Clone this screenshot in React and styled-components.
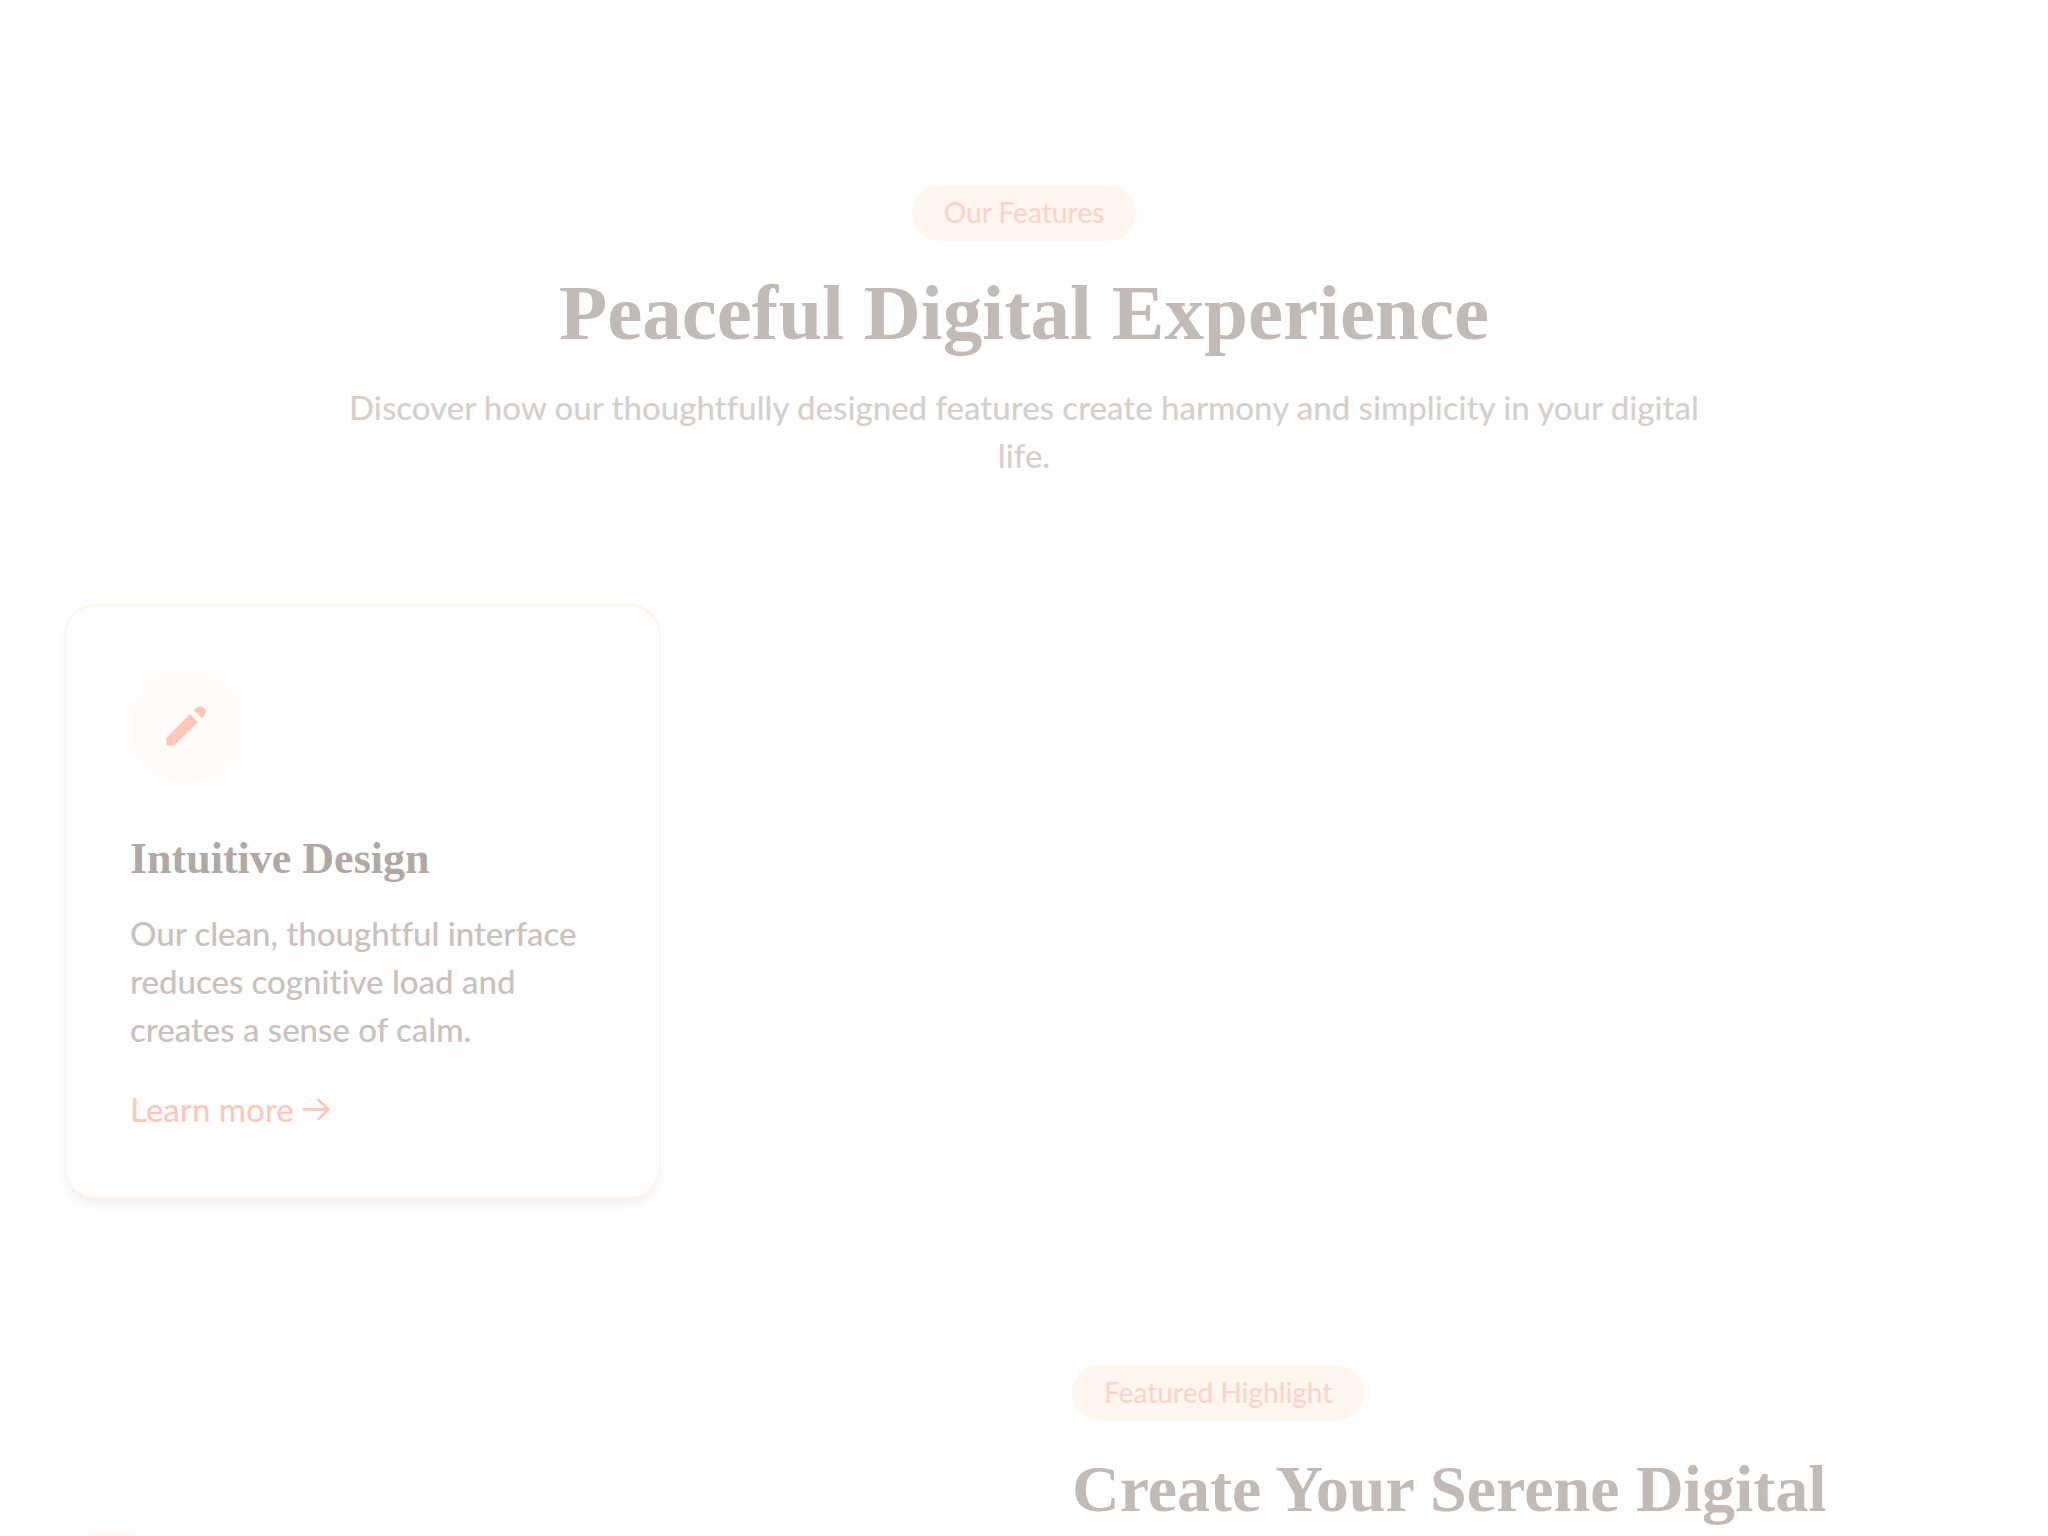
import styled, { createGlobalStyle } from 'styled-components';

const GlobalStyle = createGlobalStyle`
    * {
        box-sizing: border-box;
        margin: 0;
        padding: 0;
    }

    body {
        background: #fefefe;
        font-family: 'Lato', sans-serif;
        font-weight: 500;
        font-size: 33px;
        line-height: 48px;
        font-variant-ligatures: none;
    }
`

const Page = styled.main`
    height: 100vh;
    padding: 185px 64px 0;
    overflow: hidden;
`

const SectionHeader = styled.header`
    display: flex;
    flex-direction: column;
    align-items: center;
    max-width: 1360px;
    margin: 0 auto 125px;
    text-align: center;
`

const Badge = styled.span`
    display: inline-block;
    padding: 7px 32px 9px;
    border-radius: 28px;
    background: #fff6ef;
    font-size: 28px;
    line-height: 40px;
    color: #fcd3ca;
`

const Title = styled.h2`
    margin: 32px 0 30px;
    font-family: 'Liberation Serif', serif;
    font-weight: bold;
    font-size: 79px;
    line-height: 80px;
    color: #c1bab6;
`

const Subtitle = styled.p`
    color: #d5cfcc;
`

const CardGrid = styled.div`
    display: grid;
    grid-template-columns: repeat(3, 1fr);
    gap: 64px;
`

const Card = styled.article`
    padding: 64px;
    border: 2px solid #fff4ec;
    border-radius: 32px;
    background: #fefefe;
    box-shadow: 0 8px 12px -4px rgba(0, 0, 0, 0.07);
`

const IconCircle = styled.div`
    display: flex;
    justify-content: center;
    align-items: center;
    width: 112px;
    height: 112px;
    margin-bottom: 49px;
    border-radius: 50%;
    background: #fffbf8;
    color: #ffc6b7;
`

const CardTitle = styled.h3`
    margin-bottom: 22px;
    font-family: 'Liberation Serif', serif;
    font-weight: bold;
    font-size: 44px;
    line-height: 56px;
    color: #b0a8a4;
`

const CardText = styled.p`
    margin-bottom: 32px;
    color: #c8c1bd;
`

const CardLink = styled.a`
    display: inline-flex;
    align-items: center;
    gap: 6px;
    color: #fbc9bc;
    text-decoration: none;
    vertical-align: top;
`

const Highlight = styled.section`
    display: grid;
    grid-template-columns: repeat(2, 1fr);
    gap: 96px;
    margin-top: 166px;
`

const HighlightVisual = styled.div`
    position: relative;
    margin-top: 214px;
`

const Blob = styled.div`
    position: absolute;
    top: -48px;
    left: -48px;
    width: 192px;
    height: 192px;
    border-radius: 50%;
    background: #fff8f4;
`

const HighlightTitle = styled.h2`
    margin-top: 32px;
    font-family: 'Liberation Serif', serif;
    font-weight: bold;
    font-size: 66px;
    line-height: 72px;
    color: #c1bab6;
`

const PencilIcon = () => (
    <svg width="56" height="56" viewBox="0 0 20 20" fill="currentColor" aria-hidden="true">
        <path d="M13.586 3.586a2 2 0 112.828 2.828l-.793.793-2.828-2.828.793-.793zM11.379 5.793L3 14.172V17h2.828l8.38-8.379-2.83-2.828z" />
    </svg>
)

const ArrowIcon = () => (
    <svg width="32" height="32" viewBox="0 0 32 32" fill="none" stroke="currentColor" strokeWidth="2.8" strokeLinecap="round" strokeLinejoin="round" aria-hidden="true">
        <path d="M4 16.5H28.5M18.5 7L28.5 16.5L18.5 26" />
    </svg>
)

const App = () => {
    return (
        <>
            <GlobalStyle />
            <Page>
                <SectionHeader>
                    <Badge>Our Features</Badge>
                    <Title>Peaceful Digital Experience</Title>
                    <Subtitle>
                        Discover how our thoughtfully designed features create harmony and simplicity in your digital life.
                    </Subtitle>
                </SectionHeader>
                <CardGrid>
                    <Card>
                        <IconCircle>
                            <PencilIcon />
                        </IconCircle>
                        <CardTitle>Intuitive Design</CardTitle>
                        <CardText>
                            Our clean, thoughtful interface reduces cognitive load and creates a sense of calm.
                        </CardText>
                        <CardLink href="#intuitive-design">
                            Learn more
                            <ArrowIcon />
                        </CardLink>
                    </Card>
                </CardGrid>
                <Highlight>
                    <HighlightVisual>
                        <Blob />
                    </HighlightVisual>
                    <div>
                        <Badge>Featured Highlight</Badge>
                        <HighlightTitle>Create Your Serene Digital</HighlightTitle>
                    </div>
                </Highlight>
            </Page>
        </>
    )
}

export default App;
